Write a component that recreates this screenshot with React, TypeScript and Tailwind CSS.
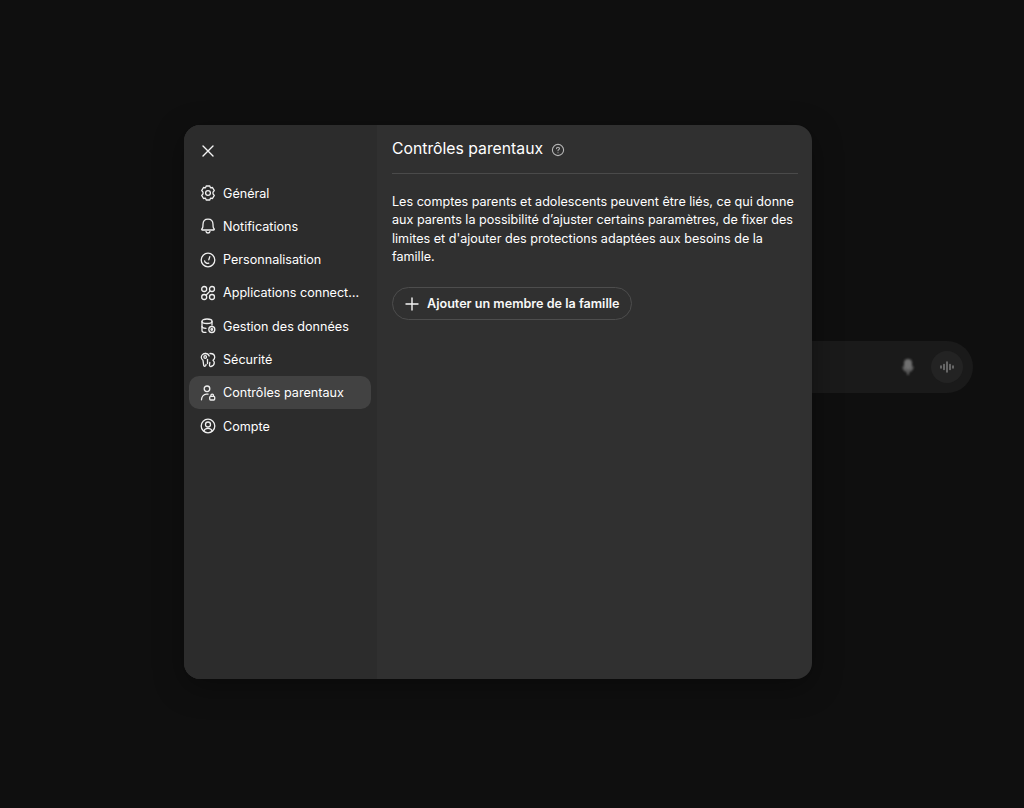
import React from "react";

const S = "#efefef";
const Ic = ({ children }: { children: React.ReactNode }) => (
  <svg width="18" height="18" viewBox="0 0 18 18" fill="none" stroke={S} strokeWidth="1.300" strokeLinecap="round" strokeLinejoin="round" className="shrink-0">
    {children}
  </svg>
);

const items: { label: string; icon: React.ReactNode; active?: boolean }[] = [
  {
    label: "Général",
    icon: (
      <Ic>
        <path d="M7.200 2h3.600l.7 1.900 2-.4 1.800 3.100L14 8.100v1.800l1.300 1.500-1.800 3.100-2-.4-.7 1.900H7.200l-.7-1.900-2 .4-1.800-3.100L4 9.900V8.100L2.700 6.600l1.800-3.100 2 .4z" />
        <circle cx="9" cy="9" r="2.400" />
      </Ic>
    ),
  },
  {
    label: "Notifications",
    icon: (
      <Ic>
        <path d="M9 2.200c-3 0-4.900 2.200-5 5l-.1 2.200c0 1-.5 1.800-1.100 2.600-.3.5 0 1 .6 1h11.200c.6 0 .9-.5.6-1-.6-.8-1.100-1.600-1.100-2.600L14 7.200c-.1-2.800-2-5-5-5z" />
        <path d="M7 14.500c.3 1 1 1.500 2 1.500s1.700-.5 2-1.500" />
      </Ic>
    ),
  },
  {
    label: "Personnalisation",
    icon: (
      <Ic>
        <circle cx="9" cy="9" r="6.800" />
        <path d="M10.800 5.600 9.800 8.800" />
        <path d="M5.600 9.800c.3 1.900 2.200 3 4.200 2.400" />
      </Ic>
    ),
  },
  {
    label: "Applications connect…",
    icon: (
      <Ic>
        <circle cx="5.200" cy="5" r="2.500" />
        <circle cx="13" cy="5" r="2.500" />
        <circle cx="5.200" cy="13" r="2.500" />
        <circle cx="13" cy="13" r="2.500" />
        <path d="M7.200 11 11 7.100" />
      </Ic>
    ),
  },
  {
    label: "Gestion des données",
    icon: (
      <Ic>
        <path d="M7 15.300H5c-1 0-2-.6-2-1.800V4.200C3 2.900 5.400 2 8 2s5 .9 5 2.200V8" />
        <path d="M3 4.500C3 5.700 5.400 6.500 8 6.500s5-.8 5-2" />
        <path d="M3 9.500c0 1 1.500 1.600 4 1.800" />
        <circle cx="12.800" cy="12.500" r="3" />
        <circle cx="12.800" cy="12.500" r=".8" />
      </Ic>
    ),
  },
  {
    label: "Sécurité",
    icon: (
      <Ic>
        <path d="M6.500 2.500c-2.500 0-4.200 1.700-4.200 3.800 0 1.300.6 2.300 1.700 3l.7 5c.1.800 1 1.200 1.600.7.500-.4.700-1 .7-1.600" />
        <circle cx="6.200" cy="6" r="1.300" />
        <path d="M6.500 2.500C8.500 2.500 9.800 3.800 10.200 5" />
        <path d="M11 2.500c2.600 0 4.700 1.500 4.700 3.700 0 1.500-.9 2.400-1.700 3 .7.700 1.300 1.400 1.300 2.600 0 1.700-1.300 3.200-3.300 3.700-1 .2-1.600-.6-1.500-1.500l.3-2.600" />
        <path d="M8.500 8.500v4" />
      </Ic>
    ),
  },
  {
    label: "Contrôles parentaux",
    active: true,
    icon: (
      <Ic>
        <circle cx="8" cy="4.800" r="2.800" />
        <path d="M2.500 15.800c.1-3 2.100-5.500 5-5.700.5 0 1 0 1.500.1" />
        <rect x="10.700" y="12.300" width="5" height="3.700" rx=".9" />
        <path d="M11.900 12.300v-.8a1.300 1.300 0 0 1 2.600 0v.8" />
      </Ic>
    ),
  },
  {
    label: "Compte",
    icon: (
      <Ic>
        <circle cx="9" cy="9" r="6.800" />
        <circle cx="9" cy="7.500" r="2.500" />
        <path d="M4.800 14c.7-1.700 2.300-2.700 4.200-2.700s3.500 1 4.200 2.700" />
      </Ic>
    ),
  },
];

export default function App() {
  return (
    <div
      className="relative h-[808px] w-[1024px] overflow-hidden bg-[#0f0f0f] pl-[184px] pt-[125px] text-white"
      style={{ fontFamily: "Inter, 'Noto Sans', sans-serif" }}
    >
      {/* Background composer, dimmed and blurred behind the dialog */}
      <div className="absolute left-[700px] top-[341px] flex h-[52px] w-[273px] items-center justify-end rounded-[26px] bg-[#1a1a1a] pr-[10px]">
        <svg width="14" height="18" viewBox="0 0 14 18" fill="#707070" className="mr-[16px] blur-[0.8px]">
          <rect x="3" y="1" width="8" height="11" rx="4" />
          <path d="M1.500 8.500h1.500c0 2.200 1.800 4.200 4 4.200s4-2 4-4.200h1.500c0 3-2.200 5.200-4.700 5.500V17h-1.600v-3C3.700 13.700 1.500 11.500 1.500 8.500z" />
        </svg>
        <div className="flex h-[32px] w-[32px] items-center justify-center rounded-full bg-[#232323]">
          <svg width="16" height="12" viewBox="0 0 16 12" stroke="#7c7c7c" strokeWidth="1.500" strokeLinecap="round" className="blur-[0.4px]">
            <path d="M2 5v2M5 3.500v5M8 1v10M11 3.500v5M14 5v2" />
          </svg>
        </div>
      </div>

      <div className="relative flex h-[554px] w-[628px] overflow-hidden rounded-[16px] bg-[#303030] shadow-[0_8px_30px_rgba(0,0,0,0.35)]">
        <aside className="flex w-[193px] shrink-0 flex-col bg-[#2c2c2c] pl-[5px] pr-[6px]">
          <div className="flex h-[51px] items-center pl-[10px] pt-[1px]">
            <svg width="18" height="18" viewBox="0 0 18 18" fill="none" stroke="#f4f4f4" strokeWidth="1.400" strokeLinecap="round">
              <path d="M4 4l10 10M14 4 4 14" />
            </svg>
          </div>
          <nav className="flex flex-col pt-[0.4px]">
            {items.map((it) => (
              <div
                key={it.label}
                className={`flex h-[33.3px] items-center gap-[6px] rounded-[10px] pl-[10px] pr-[8px] text-[12.6px] font-normal leading-[18px] ${
                  it.active ? "bg-[#424242]" : ""
                }`}
              >
                {it.icon}
                <span className="whitespace-nowrap pt-[1px]">{it.label}</span>
              </div>
            ))}
          </nav>
        </aside>
        <main className="flex min-w-0 flex-1 flex-col pl-[15px] pr-[14px]">
          <div className="flex h-[49px] items-center gap-[8px] border-b border-[#4a4a4a]">
            <h2 className="text-[15.75px] font-normal leading-[24px] text-white">Contrôles parentaux</h2>
            <svg width="14" height="14" viewBox="0 0 14 14" fill="none" stroke="#b4b4b4" strokeWidth="1.100" strokeLinecap="round" className="mt-[1px]">
              <circle cx="7" cy="7" r="5.600" />
              <path d="M5.500 5.600c0-.9.700-1.400 1.500-1.400s1.500.5 1.500 1.300c0 1.100-1.500 1.100-1.500 2.200" />
              <path d="M7 9.700v.1" />
            </svg>
          </div>
          <p className="mt-[19px] text-[12.6px] font-normal leading-[18.400px] text-white">
            Les comptes parents et adolescents peuvent être liés, ce qui donne aux parents la possibilité d’ajuster certains paramètres, de fixer des limites et d'ajouter des protections adaptées aux besoins de la famille.
          </p>
          <button className="mt-[20.400px] flex h-[33px] w-[240px] items-center gap-[7px] rounded-full border border-[#4d4d4d] pl-[11px] text-[12.6px] font-semibold text-[#f8f8f8]">
            <svg width="16" height="16" viewBox="0 0 16 16" fill="none" stroke="#f4f4f4" strokeWidth="1.400" strokeLinecap="round">
              <path d="M8 2v12M2 8h12" />
            </svg>
            <span className="pt-[1px]">Ajouter un membre de la famille</span>
          </button>
        </main>
      </div>
    </div>
  );
}
